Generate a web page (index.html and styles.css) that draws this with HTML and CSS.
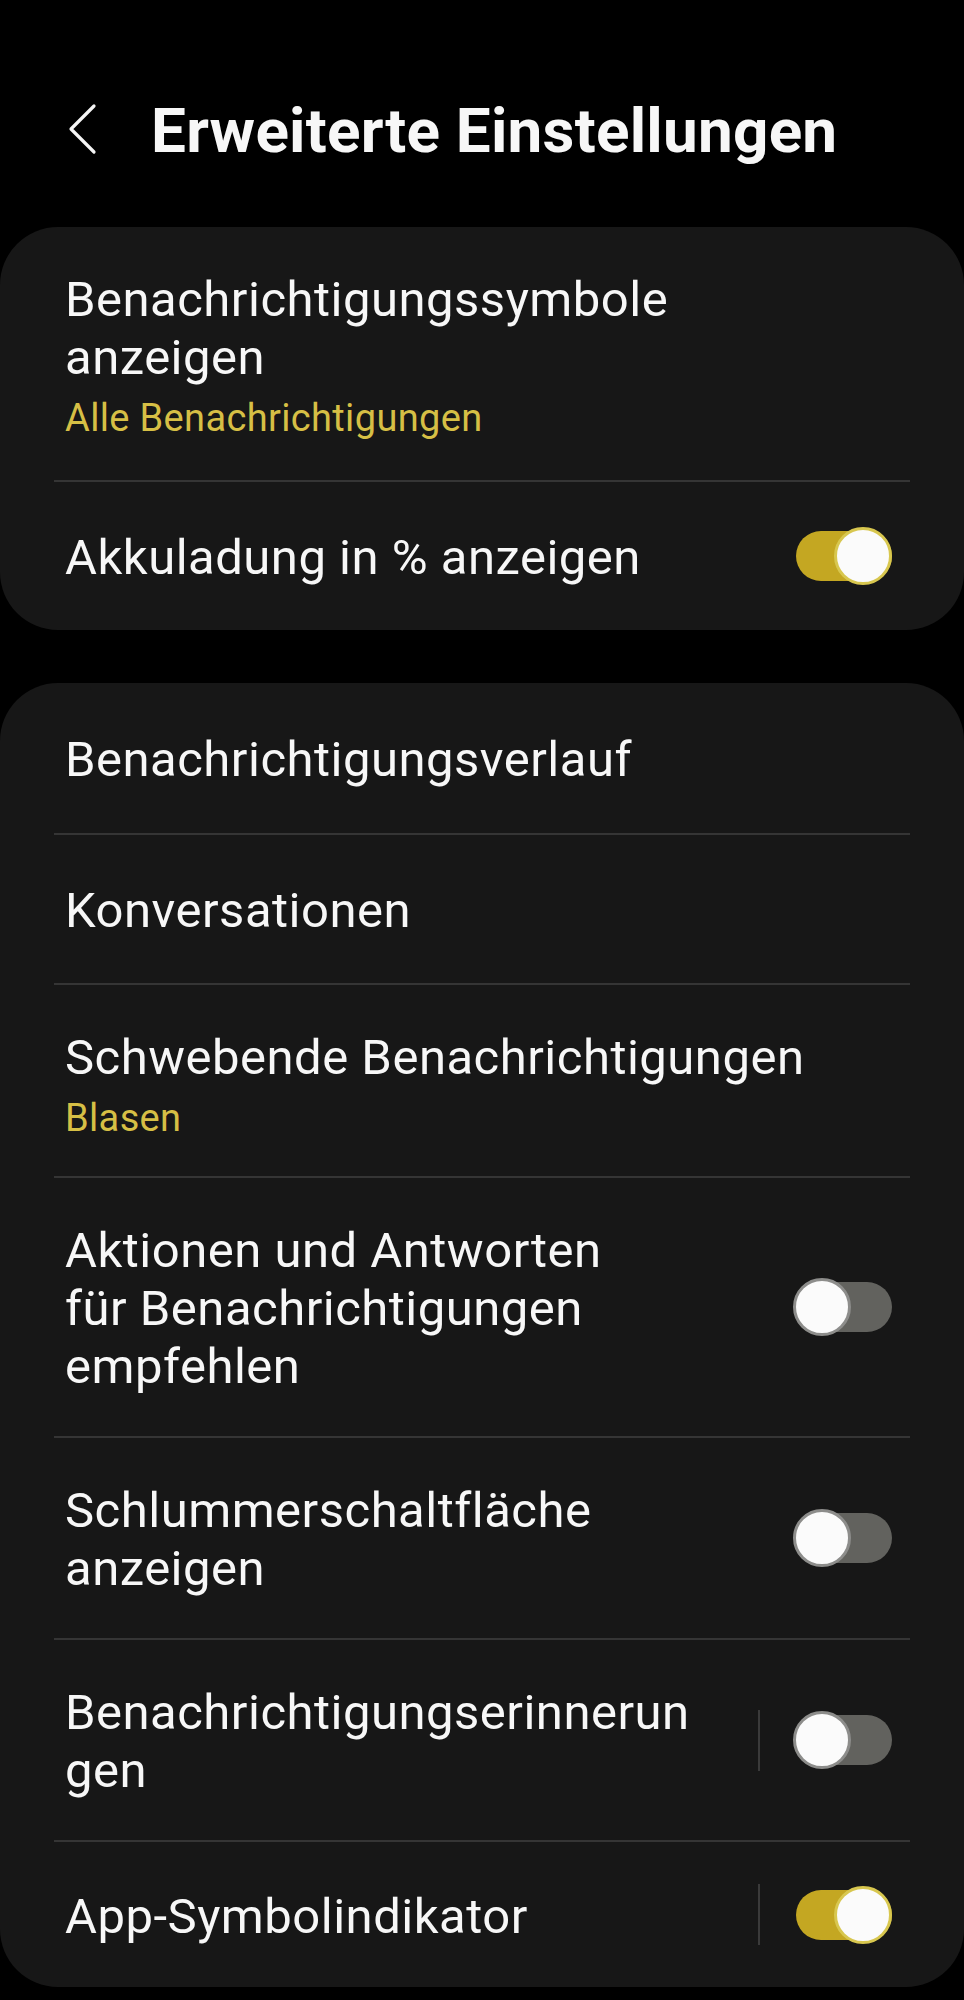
FILE: index.html
```html
<!DOCTYPE html>
<html lang="de">
<head>
<meta charset="utf-8">
<title>Erweiterte Einstellungen</title>
<link rel="stylesheet" href="styles.css">
</head>
<body>
<header class="appbar">
  <span class="back">
    <svg width="30" height="52" viewBox="0 0 30 52" aria-hidden="true">
      <path d="M26 3 L3 26 L26 49" fill="none" stroke="#f5f5f5" stroke-width="3.2" stroke-linecap="round" stroke-linejoin="round"/>
    </svg>
  </span>
  <h1 class="title">Erweiterte Einstellungen</h1>
</header>

<section class="card">
  <div class="row">
    <div class="text">
      <div class="label">Benachrichtigungssymbole<br>anzeigen</div>
      <div class="sub">Alle Benachrichtigungen</div>
    </div>
  </div>
  <div class="row">
    <div class="text"><div class="label">Akkuladung in % anzeigen</div></div>
    <div class="control"><span class="toggle on"><span class="thumb"></span></span></div>
  </div>
</section>

<section class="card card-second">
  <div class="row">
    <div class="text"><div class="label">Benachrichtigungsverlauf</div></div>
  </div>
  <div class="row">
    <div class="text"><div class="label">Konversationen</div></div>
  </div>
  <div class="row row-compact">
    <div class="text">
      <div class="label">Schwebende Benachrichtigungen</div>
      <div class="sub">Blasen</div>
    </div>
  </div>
  <div class="row">
    <div class="text"><div class="label">Aktionen und Antworten<br>für Benachrichtigungen<br>empfehlen</div></div>
    <div class="control"><span class="toggle"><span class="thumb"></span></span></div>
  </div>
  <div class="row">
    <div class="text"><div class="label">Schlummerschaltfläche<br>anzeigen</div></div>
    <div class="control"><span class="toggle"><span class="thumb"></span></span></div>
  </div>
  <div class="row">
    <div class="text"><div class="label">Benachrichtigungserinnerun<br>gen</div></div>
    <div class="control"><span class="vsep"></span><span class="toggle"><span class="thumb"></span></span></div>
  </div>
  <div class="row row-last">
    <div class="text"><div class="label">App-Symbolindikator</div></div>
    <div class="control"><span class="vsep"></span><span class="toggle on"><span class="thumb"></span></span></div>
  </div>
</section>
</body>
</html>
```

FILE: styles.css
```css
html, body {
  margin: 0;
  padding: 0;
  background: #000;
}
body {
  font-family: Roboto, "Noto Sans", "Liberation Sans", sans-serif;
  color: #f7f7f7;
  width: 964px;
  min-height: 2000px;
}
.appbar {
  display: flex;
  align-items: center;
  padding: 91px 0 0 68px;
  height: 80px;
  margin-bottom: 56px;
}
.back {
  display: flex;
  width: 30px;
  height: 52px;
  margin-right: 53px;
  margin-top: -4px;
}
.title {
  margin: 0;
  font-size: 62px;
  font-weight: 700;
  line-height: 80px;
  letter-spacing: 0.25px;
  white-space: nowrap;
}
.card {
  background: #171717;
  border-radius: 58px;
  padding: 0 54px;
}
.card-second {
  margin-top: 53px;
}
.row {
  display: flex;
  align-items: center;
  box-sizing: border-box;
  min-height: 150px;
  padding: 42px 18px 42px 11px;
  border-top: 2px solid #353535;
}
.row:first-child {
  border-top: none;
}
.row-compact {
  padding-bottom: 38px;
}
.row-last {
  min-height: 147px;
}
.text {
  flex: 1;
  min-width: 0;
  padding-top: 2px;
  margin-bottom: -2px;
}
.label {
  font-size: 49px;
  line-height: 58px;
  letter-spacing: 0.5px;
  white-space: nowrap;
}
.sub {
  font-size: 38px;
  line-height: 44px;
  letter-spacing: 0.35px;
  margin-top: 9px;
  color: #d6bf45;
  white-space: nowrap;
}
.control {
  display: flex;
  align-items: center;
  gap: 36px;
}
.vsep {
  width: 2px;
  height: 61px;
  background: #3a3a3a;
}
.toggle {
  position: relative;
  display: block;
  width: 96px;
  height: 50px;
  border-radius: 25px;
  background: #62625e;
}
.thumb {
  position: absolute;
  top: -4px;
  left: -3px;
  width: 58px;
  height: 58px;
  box-sizing: border-box;
  border-radius: 50%;
  background: #fbfbfb;
  border: 3px solid #8d8d8b;
}
.toggle.on {
  background: #c4a722;
}
.toggle.on .thumb {
  left: auto;
  right: 0;
  border-color: #d8c74f;
}
```
